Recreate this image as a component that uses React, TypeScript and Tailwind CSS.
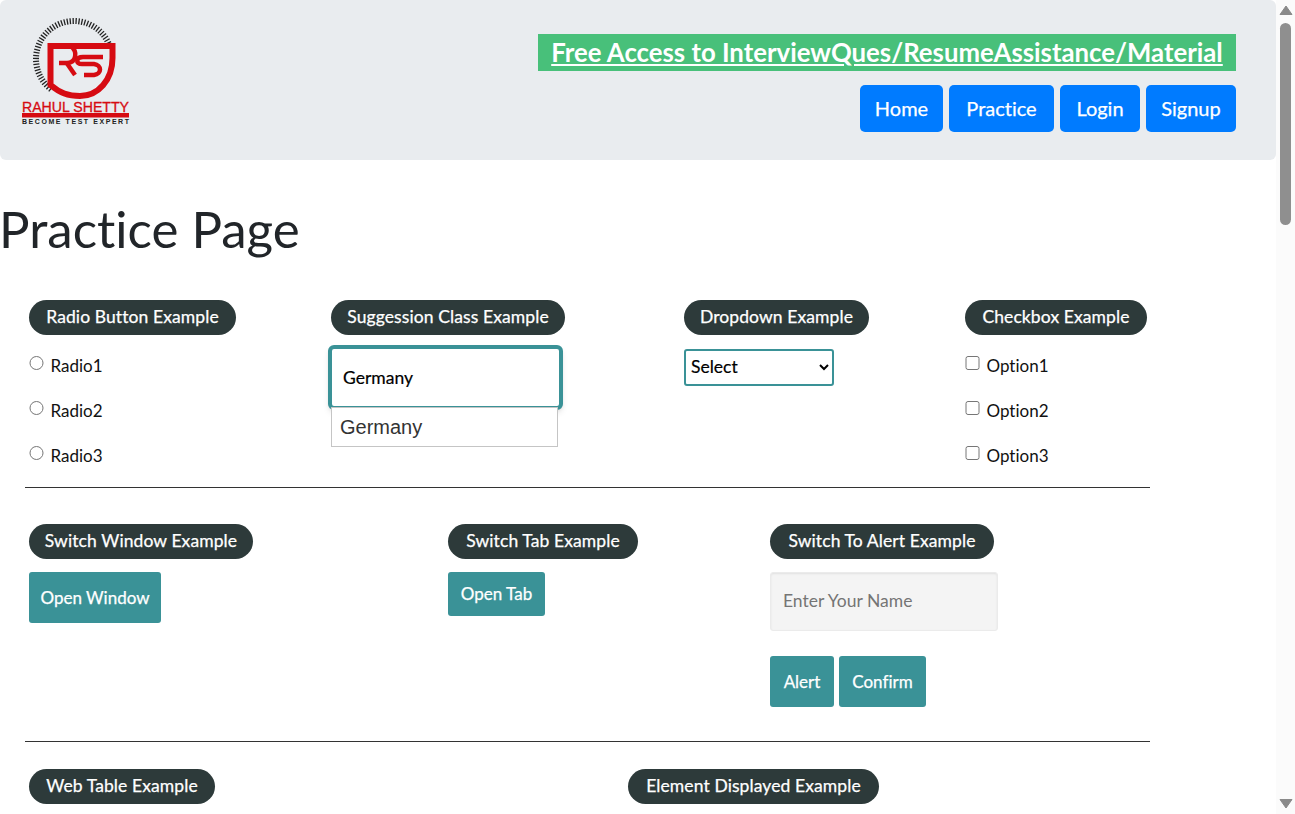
import { ReactNode } from "react"

const font = "font-['Lato','Liberation_Sans',sans-serif]"

function Legend({ children, className }: { children: ReactNode; className: string }) {
    return (
        <div className={`h-[35px] rounded-full bg-[#2d3a3a] text-center text-[17.5px] leading-[34px] tracking-[0.1px] text-white whitespace-nowrap [-webkit-text-stroke:0.25px_white] ${className}`}>
            {children}
        </div>
    )
}

function Logo() {
    const ticks = []
    for (let a = 128; a <= 340; a += 4.4) {
        const r = (a * Math.PI) / 180
        ticks.push(
            <line
                key={a}
                x1={74 + 41 * Math.cos(r)}
                y1={59 + 41 * Math.sin(r)}
                x2={74 + 35 * Math.cos(r)}
                y2={59 + 35 * Math.sin(r)}
                stroke="#222"
                strokeWidth="1.3"
            />
        )
    }
    return (
        <svg width="140" height="130" viewBox="0 0 140 130" className="shrink-0">
            <g>{ticks}</g>
            <path d="M50.5 46H112.5V58C112.5 80 98 96 80 96C68 96 60 93 50.5 85Z" fill="#e9ecef" stroke="#d60b12" strokeWidth="6" />
            <path d="M59 63H68C76 62 78 52 71 46" fill="none" stroke="#d60b12" strokeWidth="4.5" />
            <path d="M66 62L75 75" fill="none" stroke="#d60b12" strokeWidth="4.5" />
            <path d="M103 57H83C76 57 75 64 82 64H94C102 65 102 74 94 75H84" fill="none" stroke="#d60b12" strokeWidth="4.5" />
            <text x="22" y="112" fontSize="14.5" fontFamily="Liberation Sans" fill="#d60b12" stroke="#d60b12" strokeWidth="0.3" textLength="107" lengthAdjust="spacingAndGlyphs">RAHUL SHETTY</text>
            <rect x="22" y="113" width="107" height="4.5" fill="#d60b12" />
            <text x="22" y="124" fontSize="7" fontFamily="Liberation Sans" fontWeight="700" fill="#222" textLength="107" lengthAdjust="spacing">BECOME TEST EXPERT</text>
        </svg>
    )
}

function NavButton({ children, className }: { children: ReactNode; className: string }) {
    return (
        <a className={`flex h-[47px] items-center justify-center rounded-[5px] bg-[#007bff] pb-[1px] text-[20px] text-white [-webkit-text-stroke:0.25px_white] ${className}`}>{children}</a>
    )
}

function TealButton({ label, className }: { label: string; className: string }) {
    return (
        <button type="button" className={`rounded-[3px] bg-[#3a9297] text-[17px] text-white [-webkit-text-stroke:0.25px_white] ${className}`}>
            {label}
        </button>
    )
}

function Choice({ type, label }: { type: "radio" | "checkbox"; label: string }) {
    return (
        <label className="flex h-[45px] items-center text-[17px] text-[#111]">
            <input type={type} className="mb-[5px] mr-[7px] h-[14.5px] w-[14.5px]" />
            {label}
        </label>
    )
}

export default function App() {
    return (
        <div className={`flex h-[814px] overflow-hidden bg-white [font-variant-ligatures:none] ${font}`}>
            <main className="min-w-0 flex-1">
                <header className="flex h-[160px] justify-between rounded-[6px] bg-[#e9ecef] pr-[40px]">
                    <Logo />
                    <div className="flex flex-col items-end pt-[34px]">
                        <a className="h-[37px] w-[698px] bg-[#48c07a] text-center text-[25.75px] leading-[36px] font-bold text-white underline">
                            Free Access to InterviewQues/ResumeAssistance/Material
                        </a>
                        <nav className="mt-[14px] flex gap-[6px]">
                            <NavButton className="w-[83px]">Home</NavButton>
                            <NavButton className="w-[105px]">Practice</NavButton>
                            <NavButton className="w-[80px]">Login</NavButton>
                            <NavButton className="w-[90px]">Signup</NavButton>
                        </nav>
                    </div>
                </header>

                <h1 className="-ml-[1px] mt-[38px] text-[51px] leading-[62px] text-[#212529]">Practice Page</h1>

                <div className="ml-[25px] mt-[40px] w-[1125px]">
                    <div className="flex h-[188px] border-b border-[#333] pl-[4px]">
                        <div className="w-[302px]">
                            <Legend className="w-[207px]">Radio Button Example</Legend>
                            <div className="mt-[8px]">
                                <Choice type="radio" label="Radio1" />
                                <Choice type="radio" label="Radio2" />
                                <Choice type="radio" label="Radio3" />
                            </div>
                        </div>
                        <div className="relative w-[353px]">
                            <Legend className="w-[234px]">Suggession Class Example</Legend>
                            <input
                                defaultValue="Germany"
                                className="-ml-[3px] mt-[10px] block h-[65px] w-[235px] rounded-[6px] border-4 border-[#3a9297] bg-white pl-[11px] text-[17.5px] text-black shadow-md outline-none [-webkit-text-stroke:0.2px_black]"
                            />
                            <div className="absolute left-0 top-[107px] h-[40px] w-[227px] border border-[#c5c5c5] bg-white pl-2 font-['Liberation_Sans',sans-serif] text-[20px] leading-[38px] text-[#333]">
                                Germany
                            </div>
                        </div>
                        <div className="w-[281px]">
                            <Legend className="w-[185px]">Dropdown Example</Legend>
                            <select className="mt-[14px] block h-[37px] w-[150px] rounded-[3px] border-2 border-[#3a9297] bg-white pb-[2px] pl-[1px] text-[17.5px] text-black [-webkit-text-stroke:0.2px_black]">
                                <option>Select</option>
                            </select>
                        </div>
                        <div>
                            <Legend className="w-[182px]">Checkbox Example</Legend>
                            <div className="mt-[8px]">
                                <Choice type="checkbox" label="Option1" />
                                <Choice type="checkbox" label="Option2" />
                                <Choice type="checkbox" label="Option3" />
                            </div>
                        </div>
                    </div>

                    <div className="flex h-[254px] border-b border-[#333] pl-[4px] pt-[36px]">
                        <div className="w-[419px]">
                            <Legend className="w-[224px]">Switch Window Example</Legend>
                            <TealButton label="Open Window" className="mt-[13px] block h-[51px] w-[132px] pt-[1px]" />
                        </div>
                        <div className="w-[322px]">
                            <Legend className="w-[190px]">Switch Tab Example</Legend>
                            <TealButton label="Open Tab" className="mt-[13px] block h-[44px] w-[97px]" />
                        </div>
                        <div>
                            <Legend className="w-[224px]">Switch To Alert Example</Legend>
                            <input
                                placeholder="Enter Your Name"
                                className="mt-[13px] block h-[59px] w-[228px] rounded-[3px] border border-[#ebebeb] bg-[#f4f4f4] pb-[2px] pl-3 text-[17.5px] shadow-[inset_0_1px_2px_rgba(0,0,0,0.08)] outline-none placeholder:text-[#757575]"
                            />
                            <div className="mt-[25px] flex gap-[5px]">
                                <TealButton label="Alert" className="h-[51px] w-[64px]" />
                                <TealButton label="Confirm" className="h-[51px] w-[87px]" />
                            </div>
                        </div>
                    </div>

                    <div className="flex pl-[4px] pt-[27px]">
                        <div className="w-[599px]">
                            <Legend className="w-[186px]">Web Table Example</Legend>
                        </div>
                        <Legend className="w-[251px]">Element Displayed Example</Legend>
                    </div>
                </div>
            </main>

            <aside className="flex w-[19px] shrink-0 flex-col items-center bg-[#fbfbfb]">
                <svg width="14" height="16" viewBox="0 0 14 16" className="mt-[3px] shrink-0">
                    <path d="M7 3L13 11.5H1Z" fill="#8a8a8a" stroke="#8a8a8a" strokeLinejoin="round" />
                </svg>
                <div className="mt-[4px] h-[202px] w-[11px] rounded-full bg-[#8f8f8f]" />
                <div className="flex-1" />
                <svg width="14" height="16" viewBox="0 0 14 16" className="mb-[3px] shrink-0">
                    <path d="M1 4.5H13L7 13Z" fill="#8a8a8a" stroke="#8a8a8a" strokeLinejoin="round" />
                </svg>
            </aside>
        </div>
    )
}
